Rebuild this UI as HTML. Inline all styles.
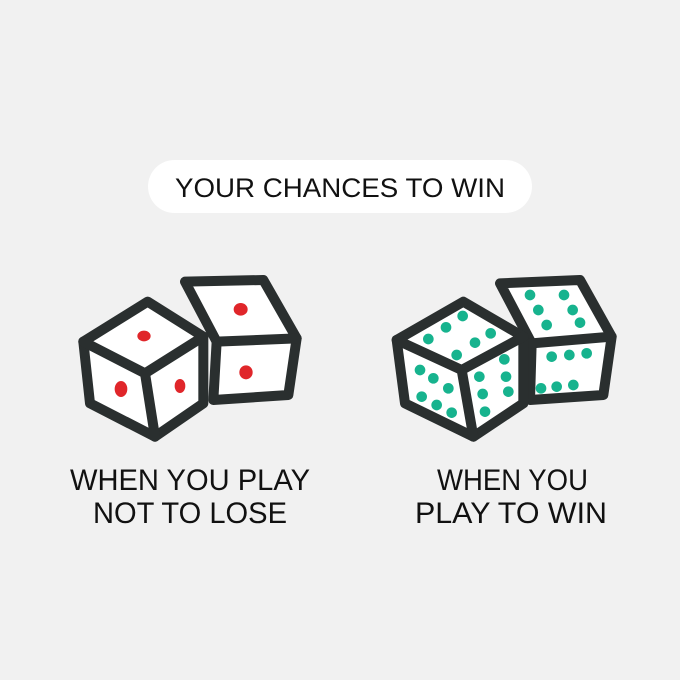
<!DOCTYPE html>
<html><head><style>
html,body{margin:0;padding:0;background:#f1f1f1;}
svg{display:block;}
text{font-family:"Liberation Sans",sans-serif;fill:#111;}
</style></head><body>
<svg width="680" height="680" viewBox="0 0 680 680" xmlns="http://www.w3.org/2000/svg">
<rect width="680" height="680" fill="#f1f1f1"/>
<rect x="148" y="160" width="384" height="53" rx="26.5" fill="#fff"/>
<text x="175" y="197" font-size="27" textLength="330" lengthAdjust="spacingAndGlyphs">YOUR CHANCES TO WIN</text>

<g transform="translate(70,270) scale(0.33333)" stroke="#2a2f2f" stroke-width="30" stroke-linejoin="round" stroke-linecap="round">
  <path d="M345,35 L580,30 L680,205 L655,375 L430,390 L440,215 Z" fill="#fff"/>
  <path d="M440,215 L680,205" fill="none"/>
  <path d="M233,95 L40,215 L60,400 L255,500 L400,400 L400,200 Z" fill="#fff"/>
  <path d="M40,215 L225,310 L400,200 M225,310 L255,500" fill="none"/>
  <g fill="#e0262a" stroke="none">
    <ellipse cx="222" cy="198" rx="20" ry="16"/>
    <ellipse cx="153" cy="357" rx="19" ry="24"/>
    <ellipse cx="330" cy="348" rx="16" ry="21"/>
    <ellipse cx="512" cy="118" rx="21" ry="19"/>
    <ellipse cx="528" cy="307" rx="20" ry="21"/>
  </g>
</g>

<g transform="translate(390,270) scale(0.33333)" stroke="#2a2f2f" stroke-width="30" stroke-linejoin="round" stroke-linecap="round">
  <path d="M330,40 L570,30 L665,200 L640,375 L420,390 L425,220 Z" fill="#fff"/>
  <path d="M425,220 L665,200" fill="none"/>
  <path d="M220,95 L20,210 L45,400 L250,500 L400,400 L400,200 Z" fill="#fff"/>
  <path d="M20,210 L215,300 L400,200 M215,300 L250,500" fill="none"/>
  <g fill="#17b38e" stroke="none">
    <circle cx="218" cy="138" r="16"/><circle cx="168" cy="172" r="16"/><circle cx="115" cy="207" r="16"/>
    <circle cx="302" cy="190" r="16"/><circle cx="255" cy="218" r="16"/><circle cx="200" cy="255" r="16"/>
    <circle cx="90" cy="300" r="16"/><circle cx="130" cy="325" r="16"/><circle cx="175" cy="355" r="16"/>
    <circle cx="95" cy="380" r="16"/><circle cx="140" cy="405" r="16"/><circle cx="185" cy="428" r="16"/>
    <circle cx="343" cy="268" r="16"/><circle cx="348" cy="320" r="16"/><circle cx="355" cy="365" r="16"/>
    <circle cx="268" cy="320" r="16"/><circle cx="278" cy="372" r="16"/><circle cx="285" cy="425" r="16"/>
    <circle cx="420" cy="75" r="16"/><circle cx="445" cy="120" r="16"/><circle cx="470" cy="165" r="16"/>
    <circle cx="522" cy="75" r="16"/><circle cx="548" cy="120" r="16"/><circle cx="570" cy="158" r="16"/>
    <circle cx="485" cy="260" r="16"/><circle cx="538" cy="255" r="16"/><circle cx="590" cy="250" r="16"/>
    <circle cx="453" cy="355" r="16"/><circle cx="500" cy="350" r="16"/><circle cx="550" cy="345" r="16"/>
  </g>
</g>

<g font-size="30">
<text x="70" y="490" textLength="240" lengthAdjust="spacingAndGlyphs">WHEN YOU PLAY</text>
<text x="93" y="523" textLength="194" lengthAdjust="spacingAndGlyphs">NOT TO LOSE</text>
<text x="437" y="490" textLength="151" lengthAdjust="spacingAndGlyphs">WHEN YOU</text>
<text x="415" y="523" textLength="192" lengthAdjust="spacingAndGlyphs">PLAY TO WIN</text>
</g>
</svg>
</body></html>
